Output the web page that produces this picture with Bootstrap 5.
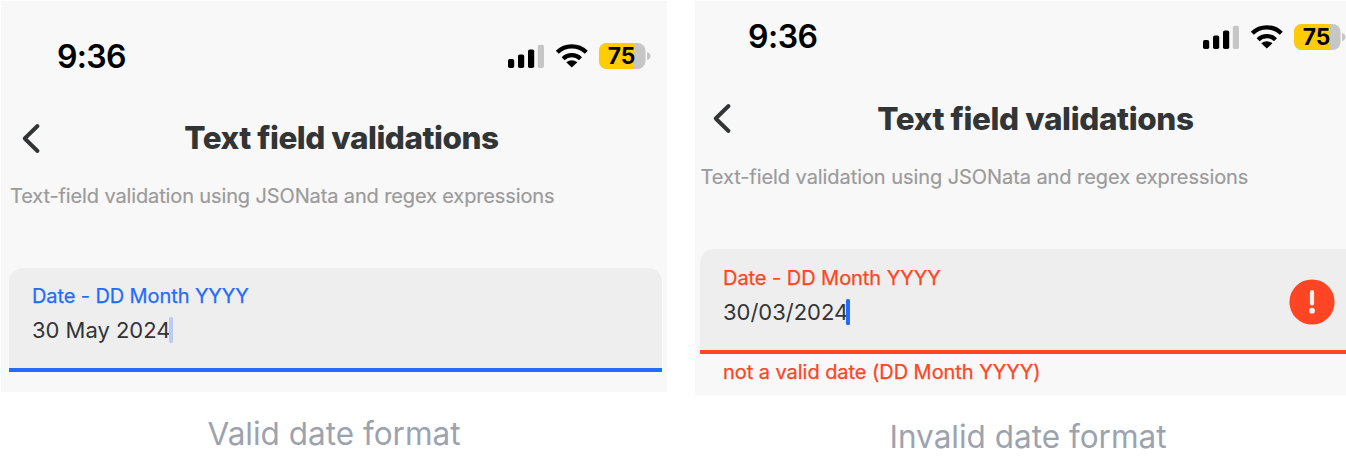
<!DOCTYPE html>
<html lang="en">
<head>
<meta charset="utf-8">
<meta name="viewport" content="width=device-width, initial-scale=1">
<title>Text field validations</title>
<link href="https://cdn.jsdelivr.net/npm/bootstrap@5.3.0/dist/css/bootstrap.min.css" rel="stylesheet">
<script src="https://cdn.jsdelivr.net/npm/bootstrap@5.3.0/dist/js/bootstrap.bundle.min.js" defer></script>
<style>
  body { font-family: Inter, "Liberation Sans", sans-serif; background: #fff; color: #323536; overflow: hidden; }
  .board { width: 1361px; height: 472px; padding-left: 1px; padding-top: 1px; gap: 28px; }
  .shot { width: 666px; }
  .phone { background: #f8f8f8; height: 391px; padding: 35px 5px 0 8px; }
  .statusbar { height: 40px; padding-left: 48px; padding-right: 11px; }
  .clock { font-size: 32px; font-weight: 600; color: #000; line-height: 40px; letter-spacing: -.7px; padding-top: 1px; }
  .titlebar { height: 44px; margin-top: 40px; }
  .back { left: 12px; top: 6.5px; }
  .heading { font-size: 31.5px; font-weight: 800; line-height: 43px; margin: 0; padding: 0 0 0 12px; letter-spacing: -.47px; }
  .intro { font-size: 20px; line-height: 30px; color: #9b9b9b; margin: 21px 0 0; padding-left: 1px; white-space: nowrap; letter-spacing: -.13px; -webkit-text-stroke: .2px; }
  .field { margin-top: 57px; height: 104px; background: #eee; border-radius: 14px 14px 0 0; border-bottom: 4px solid #246bfd; padding: 14px 23px 0; }
  .field-label { font-size: 20px; line-height: 28px; color: #246bfd; letter-spacing: -.1px; -webkit-text-stroke: .25px; }
  .field-value { font-size: 22px; line-height: 30px; margin-top: 5px; letter-spacing: -.02px; }
  .caret { width: 4px; height: 26px; border-radius: 1.5px; background: #b9cdf5; margin-left: -1.5px; }
  .caption-text { font-size: 31.5px; line-height: 44px; color: #9ca3af; margin-top: 20px; white-space: nowrap; }
  .shot-invalid .phone { height: 394px; padding-top: 16px; padding-left: 5px; padding-right: 0; }
  .shot-invalid .statusbar { padding-left: 48px; padding-right: 15.5px; }
  .shot-invalid .clock { padding-top: 0; letter-spacing: -.5px; }
  .shot-invalid .back { left: 11.5px; top: 6px; }
  .shot-invalid .heading { letter-spacing: -.38px; padding-left: 10px; }
  .shot-invalid .intro { letter-spacing: -.07px; padding-left: .5px; }
  .shot-invalid .field { margin-top: 57.3px; height: 104.7px; padding-top: 14.7px; border-color: #ff4523; }
  .shot-invalid .field-label { letter-spacing: -.05px; }
  .shot-invalid .field-label, .error-text { color: #ff4523; }
  .shot-invalid .caret { background: #246bfd; margin-left: -2px; }
  .alert-icon { right: 26px; top: 29.5px; }
  .error-text { font-size: 20px; line-height: 28px; padding-left: 23px; margin-top: 4px; letter-spacing: -.05px; -webkit-text-stroke: .25px; }
</style>
</head>
<body>
<main class="board d-flex">
  <section class="shot flex-shrink-0">
    <div class="phone">
      <div class="statusbar d-flex justify-content-between align-items-center">
        <span class="clock">9:36</span>
        <svg width="143" height="26" viewBox="0 0 143 26"><g id="status"><rect x="0" y="16" width="6.2" height="9" rx="1.8"/><rect x="10" y="11.5" width="6.2" height="13.5" rx="1.8"/><rect x="20" y="6.5" width="6.2" height="18.5" rx="1.8"/><rect x="29.8" y="1.8" width="6.2" height="23.2" rx="1.8" fill="#c6c6c6"/><path d="M49.3 9.2A20.8 20.8 0 0 1 78.3 9.2M55.1 15.7A12.5 12.5 0 0 1 72.500 15.7" fill="none" stroke="#000" stroke-width="4.3"/><path d="M63.8 24.600L58.2 19.300Q63.8 15 69.4 19.300Z"/><rect x="91" width="46.5" height="26" rx="8" fill="#c6c6c6"/><path d="M126 0H99a8 8 0 0 0-8 8v10a8 8 0 0 0 8 8h27z" fill="#fc0"/><path d="M139 9q3.5 1 3.5 4t-3.5 4z" fill="#c6c6c6"/><text x="99.8" y="21.3" font-size="22.8" font-weight="700" letter-spacing="-.2">75</text></g></svg>
      </div>
      <div class="titlebar position-relative text-center">
        <svg class="back position-absolute" width="22" height="31" viewBox="0 0 22 31" fill="none" stroke="#323536" stroke-width="3.9" stroke-linecap="round" stroke-linejoin="round"><path d="M16.5 3L3.7 15.5L16.5 28"/></svg>
        <h1 class="heading">Text field validations</h1>
      </div>
      <p class="intro">Text-field validation using JSONata and regex expressions</p>
      <div class="field">
        <div class="field-label">Date - DD Month YYYY</div>
        <div class="field-value d-flex align-items-center"><span>30 May 2024</span><span class="caret"></span></div>
      </div>
    </div>
    <div class="caption-text text-center">Valid date format</div>
  </section>
  <section class="shot shot-invalid flex-shrink-0">
    <div class="phone">
      <div class="statusbar d-flex justify-content-between align-items-center">
        <span class="clock">9:36</span>
        <svg width="143" height="26" viewBox="0 0 143 26"><use href="#status"/></svg>
      </div>
      <div class="titlebar position-relative text-center">
        <svg class="back position-absolute" width="22" height="31" viewBox="0 0 22 31" fill="none" stroke="#323536" stroke-width="3.9" stroke-linecap="round" stroke-linejoin="round"><path d="M16.5 3L3.7 15.5L16.5 28"/></svg>
        <h2 class="heading">Text field validations</h2>
      </div>
      <p class="intro">Text-field validation using JSONata and regex expressions</p>
      <div class="field position-relative">
        <div class="field-label">Date - DD Month YYYY</div>
        <div class="field-value d-flex align-items-center"><span>30/03/2024</span><span class="caret"></span></div>
        <svg class="alert-icon position-absolute" width="46" height="46" viewBox="0 0 46 46"><circle cx="23" cy="23" r="22.6" fill="#ff4523"/><path d="M23 13v11.5" stroke="#f8f2f0" stroke-width="4.2" stroke-linecap="round"/><circle cx="23" cy="31.7" r="2.9" fill="#f8f2f0"/></svg>
      </div>
      <div class="error-text">not a valid date (DD Month YYYY)</div>
    </div>
    <div class="caption-text text-center">Invalid date format</div>
  </section>
</main>
</body>
</html>
